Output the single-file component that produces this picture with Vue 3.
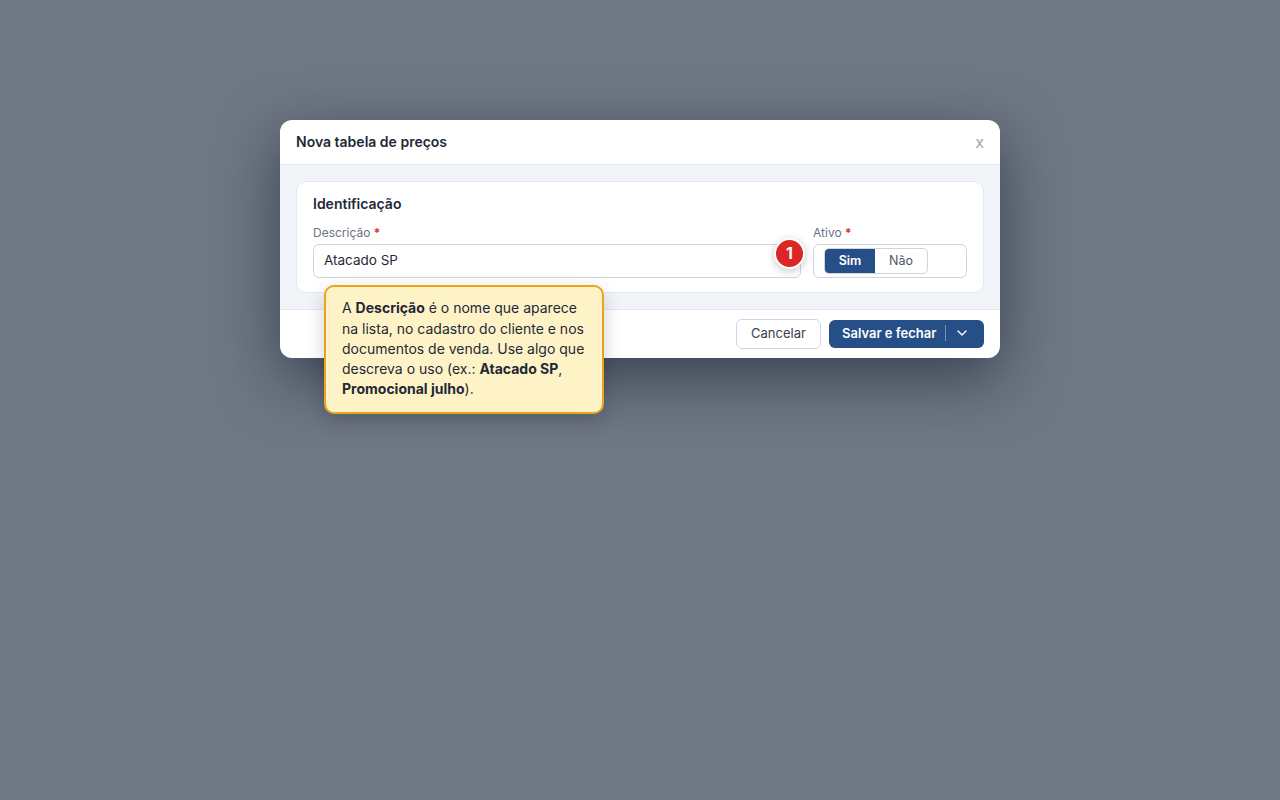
<script setup>
</script>

<template>
  <div class="overlay">
    <div class="modal">
      <header class="modal-head">
        <h2 class="modal-title">Nova tabela de preços</h2>
        <span class="close">x</span>
      </header>
      <div class="modal-body">
        <section class="card">
          <h3 class="card-title">Identificação</h3>
          <div class="fields">
            <div class="field grow">
              <label class="label">Descrição <span class="req">*</span></label>
              <div class="input">Atacado SP</div>
            </div>
            <div class="field ativo">
              <label class="label">Ativo <span class="req">*</span></label>
              <div class="toggle-box">
                <div class="toggle">
                  <span class="opt on">Sim</span>
                  <span class="opt">Não</span>
                </div>
              </div>
            </div>
          </div>
        </section>
      </div>
      <footer class="modal-foot">
        <button class="btn ghost">Cancelar</button>
        <button class="btn primary">
          <span>Salvar e fechar</span>
          <span class="sep"></span>
          <svg class="chev" width="14" height="14" viewBox="0 0 14 14" fill="none"><path d="M3 5l4 4 4-4" stroke="currentColor" stroke-width="1.4" stroke-linecap="round" stroke-linejoin="round"/></svg>
        </button>
      </footer>
      <div class="badge">1</div>
      <div class="callout">
        A <b>Descrição</b> é o nome que aparece na lista, no cadastro do cliente e nos documentos de venda. Use algo que descreva o uso (ex.: <b>Atacado SP</b>, <b>Promocional julho</b>).
      </div>
    </div>
  </div>
</template>

<style>
html, body { margin: 0; background: #6e7783; }
</style>

<style scoped>
.overlay {
  width: 1280px;
  height: 800px;
  background: #6e7783;
  display: flex;
  justify-content: center;
  align-items: flex-start;
  padding-top: 120px;
  box-sizing: border-box;
  font-family: Inter, "Liberation Sans", sans-serif;
  color: #1f2937;
}
.modal {
  position: relative;
  width: 720px;
  background: #fff;
  border-radius: 12px;
  box-shadow: 0 20px 60px rgba(15, 23, 42, 0.55);
}
.modal-head {
  padding: 0 16px 2px;
  height: 42px;
  display: flex;
  align-items: center;
  justify-content: space-between;
  border-bottom: 1px solid #e5e7eb;
}
.modal-title {
  margin: 0;
  font-size: 14px;
  font-weight: 600;
  color: #1f2937;
}
.close {
  font-size: 16px;
  color: #9ca3af;
  line-height: 1;
  margin-top: 2px;
}
.modal-body {
  background: #f1f5f9;
  padding: 16px;
  border-bottom: 1px solid #e5e7eb;
}
.card {
  background: #fff;
  border: 1px solid #e5e7eb;
  border-radius: 10px;
  padding: 13px 16px 14px;
  height: 112px;
  box-sizing: border-box;
}
.card-title {
  margin: 0 0 13px;
  font-size: 14px;
  font-weight: 600;
  line-height: 17px;
  color: #1f2937;
}
.fields {
  display: flex;
  gap: 12px;
}
.field { display: flex; flex-direction: column; gap: 4px; }
.grow { flex: 1; }
.ativo { width: 154px; }
.label {
  font-size: 12px;
  line-height: 15px;
  color: #6b7280;
}
.req { color: #dc2626; font-weight: 600; }
.input {
  height: 34px;
  box-sizing: border-box;
  border: 1px solid #d1d5db;
  border-radius: 6px;
  padding: 0 10px 2px;
  display: flex;
  align-items: center;
  font-size: 13.5px;
  color: #1f2937;
}
.toggle-box {
  height: 34px;
  box-sizing: border-box;
  border: 1px solid #d1d5db;
  border-radius: 6px;
  padding: 3px 10px;
  display: flex;
  align-items: center;
}
.toggle {
  display: flex;
  border: 1px solid #d1d5db;
  border-radius: 5px;
  height: 26px;
  box-sizing: border-box;
  overflow: hidden;
}
.opt {
  display: flex;
  align-items: center;
  justify-content: center;
  font-size: 12.5px;
  color: #4b5563;
  width: 52px;
  padding-bottom: 2px;
  box-sizing: border-box;
}
.opt.on {
  width: 50px;
  background: #264f87;
  color: #fff;
  font-weight: 600;
}
.modal-foot {
  height: 48px;
  box-sizing: border-box;
  padding: 0 16px;
  display: flex;
  justify-content: flex-end;
  align-items: center;
  gap: 8px;
}
.btn {
  font-family: inherit;
  font-size: 13px;
  border-radius: 6px;
  display: flex;
  align-items: center;
  box-sizing: border-box;
  cursor: pointer;
}
.ghost {
  height: 30px;
  width: 85px;
  justify-content: center;
  background: #fff;
  border: 1px solid #d1d5db;
  color: #374151;
  padding-bottom: 3px;
}
.primary {
  height: 28px;
  width: 155px;
  padding: 0 0 2px 13px;
  border: 0;
  background: #264f87;
  color: #fff;
  font-weight: 600;
}
.sep {
  width: 1px;
  height: 16px;
  background: rgba(255, 255, 255, 0.4);
  margin: 0 9px;
}
.badge {
  position: absolute;
  left: 494px;
  top: 118px;
  width: 31px;
  height: 31px;
  box-sizing: border-box;
  border: 2px solid #fff;
  border-radius: 50%;
  background: #dc2626;
  color: #fff;
  font-size: 16px;
  font-weight: 700;
  padding-bottom: 1px;
  display: flex;
  align-items: center;
  justify-content: center;
  box-shadow: 0 2px 8px rgba(0, 0, 0, 0.22);
}
.callout {
  position: absolute;
  left: 44px;
  top: 165px;
  width: 280px;
  height: 129px;
  box-sizing: border-box;
  padding: 11.3px 16px;
  background: #fef3c7;
  border: 2px solid #eba21c;
  border-radius: 10px;
  font-size: 14px;
  line-height: 20.3px;
  color: #1f2937;
  box-shadow: 0 6px 20px rgba(0, 0, 0, 0.18);
}
.callout b { font-weight: 700; }
</style>
